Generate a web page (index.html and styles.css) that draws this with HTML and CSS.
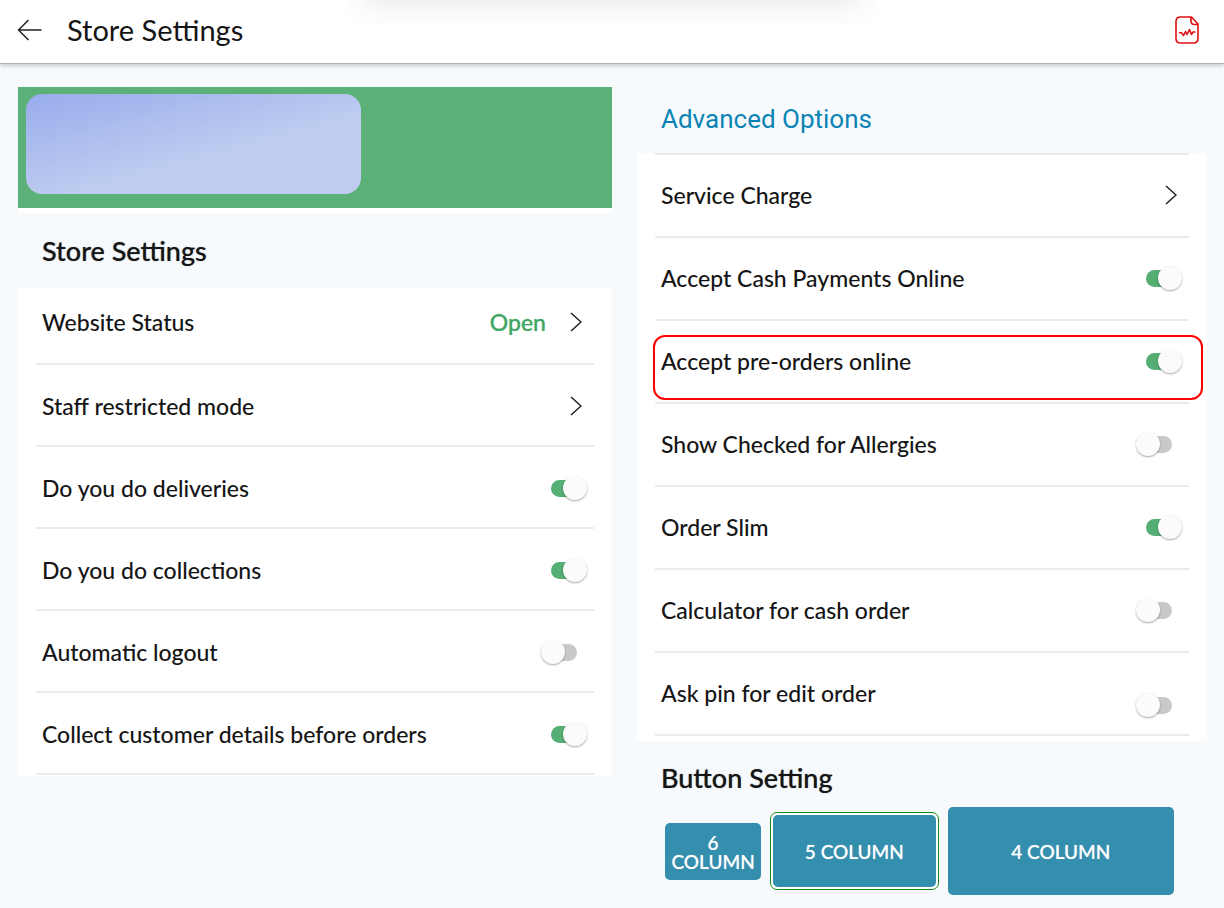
FILE: index.html
```html
<!DOCTYPE html>
<html lang="en">
<head>
<meta charset="utf-8">
<title>Store Settings</title>
<link rel="stylesheet" href="styles.css">
</head>
<body>
<header class="topbar">
  <button class="icon-button" type="button" aria-label="Back">
    <svg width="26" height="22" viewBox="0 0 26 22" fill="none" stroke="#222" stroke-width="1.5"><path d="M24.500 11H1.500M11.500 1L1.500 11l10 10"/></svg>
  </button>
  <h1 class="topbar-title">Store Settings</h1>
  <button class="icon-button" type="button" aria-label="Activity report">
    <svg width="26" height="30" viewBox="0 0 26 30" fill="none" stroke="#e01010" stroke-width="1.6" stroke-linejoin="round" stroke-linecap="round"><path d="M17.500 2H6.500Q2 2 2 6.500V23.500Q2 28 6.500 28H19.500Q24 28 24 23.500V9ZM17 2v4Q17 9.500 20.500 9.500H24M5.500 17.800H7.500L9.500 20.500L11.500 16.500L13 19.500L15.500 14.500L17.500 19.500L19 17H21"/></svg>
  </button>
</header>
<main class="layout">
  <section class="column">
    <div class="banner"><div class="banner-logo"></div></div>
    <h2 class="section-title">Store Settings</h2>
    <div class="card card-store">
      <a class="row row-first" href="#status"><span class="label">Website Status</span><span class="status">Open</span><svg class="chevron" viewBox="0 0 12 22"><path d="M1 2l10 9-10 9"/></svg></a>
      <a class="row" href="#staff"><span class="label">Staff restricted mode</span><svg class="chevron" viewBox="0 0 12 22"><path d="M1 2l10 9-10 9"/></svg></a>
      <div class="row"><label class="label" for="deliveries">Do you do deliveries</label><input class="toggle" type="checkbox" id="deliveries" checked></div>
      <div class="row"><label class="label" for="collections">Do you do collections</label><input class="toggle" type="checkbox" id="collections" checked></div>
      <div class="row"><label class="label" for="logout">Automatic logout</label><input class="toggle" type="checkbox" id="logout"></div>
      <div class="row"><label class="label" for="details">Collect customer details before orders</label><input class="toggle" type="checkbox" id="details" checked></div>
    </div>
  </section>
  <section class="column">
    <h2 class="advanced-title">Advanced Options</h2>
    <div class="card card-advanced">
      <a class="row" href="#charge"><span class="label">Service Charge</span><svg class="chevron" viewBox="0 0 12 22"><path d="M1 2l10 9-10 9"/></svg></a>
      <div class="row"><label class="label" for="cash">Accept Cash Payments Online</label><input class="toggle" type="checkbox" id="cash" checked></div>
      <div class="row row-marked"><label class="label" for="preorders">Accept pre-orders online</label><input class="toggle" type="checkbox" id="preorders" checked></div>
      <div class="row"><label class="label" for="allergies">Show Checked for Allergies</label><input class="toggle" type="checkbox" id="allergies"></div>
      <div class="row"><label class="label" for="slim">Order Slim</label><input class="toggle" type="checkbox" id="slim" checked></div>
      <div class="row"><label class="label" for="calculator">Calculator for cash order</label><input class="toggle" type="checkbox" id="calculator"></div>
      <div class="row row-low"><label class="label" for="pin">Ask pin for edit order</label><input class="toggle" type="checkbox" id="pin"></div>
    </div>
    <h2 class="button-title">Button Setting</h2>
    <div class="choices">
      <button class="choice choice-small" type="button">6 COLUMN</button>
      <div class="choice-selected"><button class="choice choice-medium" type="button" aria-pressed="true">5 COLUMN</button></div>
      <button class="choice choice-large" type="button">4 COLUMN</button>
    </div>
  </section>
</main>
</body>
</html>
```
FILE: styles.css
```css
* { box-sizing: border-box; }
body {
  margin: 0;
  min-height: 100vh;
  background: #f7fafd;
  color: #151515;
  font-family: Lato, "Liberation Sans", sans-serif;
  font-size: 23px;
  font-weight: 500;
}
h1, h2 { margin: 0; }
button { border: 0; font-family: inherit; cursor: pointer; }
.topbar {
  position: relative;
  display: flex;
  align-items: center;
  gap: 24px;
  height: 64px;
  padding: 0 24px 4px 17px;
  background: #fff;
  border-bottom: 1px solid #b0b2b4;
  box-shadow: 0 2px 4px rgba(60, 70, 80, .25);
}
.topbar::before {
  content: "";
  position: absolute;
  top: 0;
  left: 28%;
  right: 28%;
  height: 28px;
  background:
    linear-gradient(90deg, #fff, rgba(255, 255, 255, 0) 8%, rgba(255, 255, 255, 0) 92%, #fff),
    linear-gradient(#f1f1f1, #f8f8f8 40%, #fff);
}
.topbar-title { position: relative; flex: 1; font-size: 29px; line-height: 34px; font-weight: 400; }
.icon-button { display: flex; padding: 0; background: none; }
.layout {
  display: grid;
  grid-template-columns: 594fr 570fr;
  gap: 25px;
  padding: 23px 17px 12px 18px;
}
.banner { padding: 7px 8px 14px; background: #5bb177; box-shadow: 0 5px #fff; }
.banner-logo {
  width: 58%;
  height: 100px;
  border-radius: 16px;
  background: linear-gradient(165deg, #98acec, #bfcdf0 60%, #c1cbf0);
}
.section-title, .button-title {
  font-size: 27px;
  line-height: 32px;
  font-weight: 500;
  text-shadow: 0 0 1px rgba(21, 21, 21, .6);
}
.section-title { padding: 27px 24px 21px; }
.card { padding: 0 18px; background: #fff; }
.row {
  display: flex;
  align-items: center;
  height: 82px;
  padding: 2px 17px 0 6px;
  border-bottom: 2px solid #ebebeb;
  color: inherit;
  text-decoration: none;
}
.card-store { padding-bottom: 1px; }
.row-first { height: 77px; padding-top: 0; padding-bottom: 7px; }
.label { flex: 1; line-height: 30px; }
.status { margin-right: 24px; color: #43a664; text-shadow: 0 0 1px rgba(67, 166, 100, .6); }
.chevron { width: 12px; height: 22px; margin-right: -5px; fill: none; stroke: #222; stroke-width: 1.5; }
.toggle {
  appearance: none;
  position: relative;
  width: 26px;
  height: 17px;
  margin: 0;
  border-radius: 9px;
  background: #c9c9c9;
}
.toggle::before {
  content: "";
  position: absolute;
  top: -4px;
  left: -10px;
  width: 24px;
  height: 24px;
  border-radius: 50%;
  background: #fbfbfb;
  box-shadow: 0 1px 2px rgba(0, 0, 0, .35);
}
.toggle:checked { background: #55ae74; }
.toggle:checked::before { left: 12px; }
.advanced-title { padding: 16px 24px 18px; font: 400 26px/32px Roboto, sans-serif; color: #0b84b5; }
.card-advanced { padding-bottom: 5px; }
.card-advanced::before { content: ""; display: block; height: 2px; background: #ebebeb; }
.card-advanced .row { height: 83px; padding-top: 0; }
.card-advanced .label, .card-advanced .chevron { margin-bottom: 2px; }
.row-marked { position: relative; }
.row-marked::after {
  content: "";
  position: absolute;
  inset: 14px -14px 2px -2px;
  border: 2px solid #f00;
  border-radius: 12px;
  pointer-events: none;
}
.row-low .toggle { margin-top: 24px; }
.button-title { padding: 21px 24px 13px; }
.choices {
  display: grid;
  grid-template-columns: 96fr 168fr 226fr;
  align-items: center;
  gap: 9px;
  padding: 0 33px 0 28px;
}
.choice {
  border-radius: 5px;
  background: #348eae;
  color: #fff;
  font-size: 19px;
  line-height: 19px;
  font-weight: 500;
  text-shadow: 0 0 1px rgba(255, 255, 255, .6);
}
.choice-small { height: 57px; padding: 2px 0 0; }
.choice-selected { padding: 2px; border: 1px solid #168a16; border-radius: 7px; background: #fff; }
.choice-medium { width: 100%; height: 72px; }
.choice-large { height: 88px; }
```
